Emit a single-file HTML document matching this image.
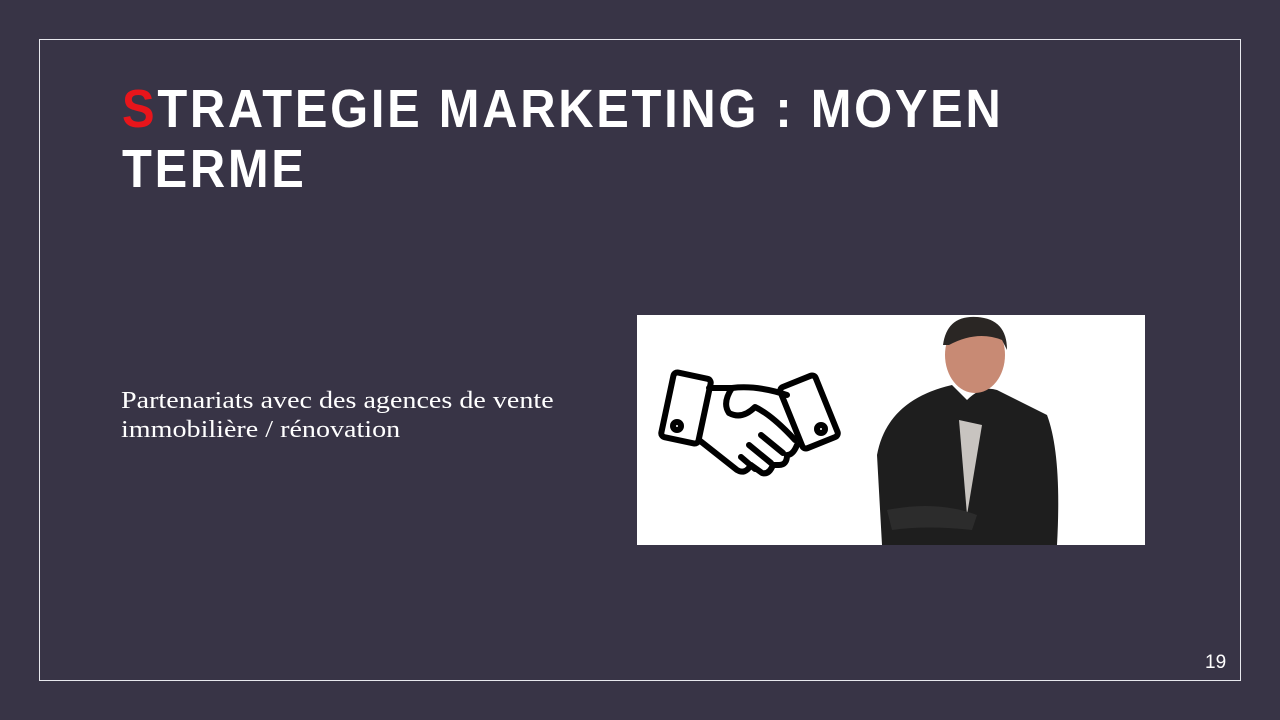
<!DOCTYPE html>
<html><head><meta charset="utf-8"><style>
html,body{margin:0;padding:0;}
body{width:1280px;height:720px;background:#383446;position:relative;overflow:hidden;font-family:"Liberation Sans",sans-serif;}
.frame{position:absolute;left:39px;top:39px;width:1202px;height:642px;border:1px solid #e8e8ee;box-sizing:border-box;}
.title{position:absolute;left:122px;top:79px;color:#fff;font-weight:bold;font-size:54px;line-height:60px;letter-spacing:3px;transform:scaleX(0.905);transform-origin:left top;white-space:nowrap;}
.title span{color:#e8151b;}
.body{position:absolute;left:121px;top:387px;color:#fff;font-family:"Liberation Serif",serif;font-size:24px;line-height:29px;transform:scaleX(1.17);transform-origin:left top;white-space:nowrap;}
.img{position:absolute;left:637px;top:315px;width:508px;height:230px;background:#fff;overflow:hidden;}
.num{position:absolute;left:1205px;top:652px;color:#fff;font-size:19px;}
</style></head><body>
<div class="frame"></div>
<div class="title"><span>S</span>TRATEGIE MARKETING : MOYEN<br>TERME</div>
<div class="body">Partenariats avec des agences de vente<br>immobilière / rénovation</div>
<div class="img">
<svg width="508" height="230" viewBox="0 0 508 230">
<g fill="none" stroke="#000" stroke-width="6" stroke-linejoin="round" stroke-linecap="round">
<rect x="30" y="60" width="38" height="66" rx="4" transform="rotate(12 49 93)"/>
<rect x="153" y="64" width="38" height="66" rx="4" transform="rotate(-22 172 97)"/>
<circle cx="40" cy="111" r="4"/><circle cx="184" cy="114" r="4"/>
<path d="M72 73 L95 73 Q120 70 150 80"/>
<path d="M95 73 Q85 88 92 98 Q105 105 118 92 Q135 100 158 125"/>
<path d="M62 125 L100 155 Q108 160 114 150 L125 158 Q132 160 136 150 L142 150 Q150 150 150 140 Q156 140 160 130"/>
<path d="M104 142 L118 154 M112 130 L134 148 M124 120 L146 138"/>
</g>
<path d="M245 230 L240 140 Q250 85 315 70 L330 85 Q345 70 360 75 L410 100 Q425 140 420 230 Z" fill="#1e1e1e"/>
<path d="M322 105 L330 200 L345 110 Z" fill="#c8c4c0"/>
<ellipse cx="338" cy="40" rx="30" ry="38" fill="#c88a74"/>
<path d="M306 30 Q310 0 340 2 Q370 4 370 35 L365 25 Q340 15 312 30 Z" fill="#2a2624"/>
<path d="M250 195 Q300 185 340 200 L335 215 Q290 210 255 215 Z" fill="#2c2c2c"/>
</svg>
</div>
<div class="num">19</div>
</body></html>
